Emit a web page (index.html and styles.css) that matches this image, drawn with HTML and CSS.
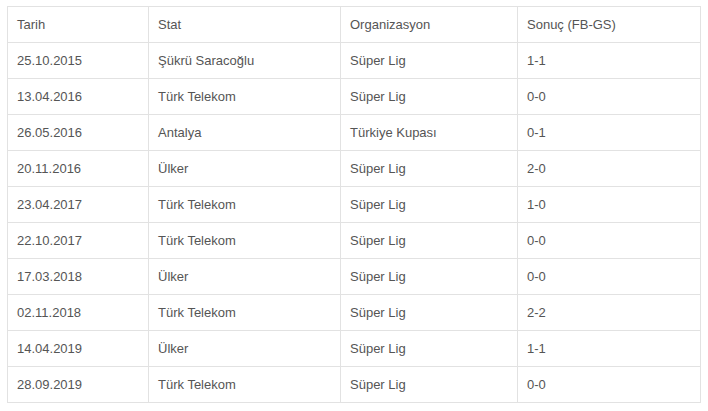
FILE: index.html
```html
<!DOCTYPE html>
<html lang="tr">
<head>
<meta charset="utf-8">
<link rel="stylesheet" href="styles.css">
</head>
<body>
<table class="matches">
  <colgroup>
    <col class="c1"><col class="c2"><col class="c3"><col class="c4">
  </colgroup>
  <thead>
    <tr><th>Tarih</th><th>Stat</th><th>Organizasyon</th><th>Sonuç (FB-GS)</th></tr>
  </thead>
  <tbody>
    <tr><td>25.10.2015</td><td>Şükrü Saracoğlu</td><td>Süper Lig</td><td>1-1</td></tr>
    <tr><td>13.04.2016</td><td>Türk Telekom</td><td>Süper Lig</td><td>0-0</td></tr>
    <tr><td>26.05.2016</td><td>Antalya</td><td>Türkiye Kupası</td><td>0-1</td></tr>
    <tr><td>20.11.2016</td><td>Ülker</td><td>Süper Lig</td><td>2-0</td></tr>
    <tr><td>23.04.2017</td><td>Türk Telekom</td><td>Süper Lig</td><td>1-0</td></tr>
    <tr><td>22.10.2017</td><td>Türk Telekom</td><td>Süper Lig</td><td>0-0</td></tr>
    <tr><td>17.03.2018</td><td>Ülker</td><td>Süper Lig</td><td>0-0</td></tr>
    <tr><td>02.11.2018</td><td>Türk Telekom</td><td>Süper Lig</td><td>2-2</td></tr>
    <tr><td>14.04.2019</td><td>Ülker</td><td>Süper Lig</td><td>1-1</td></tr>
    <tr><td>28.09.2019</td><td>Türk Telekom</td><td>Süper Lig</td><td>0-0</td></tr>
  </tbody>
</table>
</body>
</html>
```
FILE: styles.css
```css
html, body {
  margin: 0;
  background: #fff;
}
body {
  padding: 6px 0 0 7px;
  font-family: "Liberation Sans", Arial, sans-serif;
  font-size: 13px;
  color: #555;
}
.matches {
  border-collapse: collapse;
  table-layout: fixed;
  width: 693px;
  border: 1px solid #e2e2e2;
}
.c1 { width: 141px; }
.c2 { width: 192px; }
.c3 { width: 177px; }
.c4 { width: 183px; }
.matches th,
.matches td {
  border: 1px solid #e2e2e2;
  padding: 8px 9px;
  line-height: 19px;
  text-align: left;
  font-weight: normal;
  white-space: nowrap;
}
```
